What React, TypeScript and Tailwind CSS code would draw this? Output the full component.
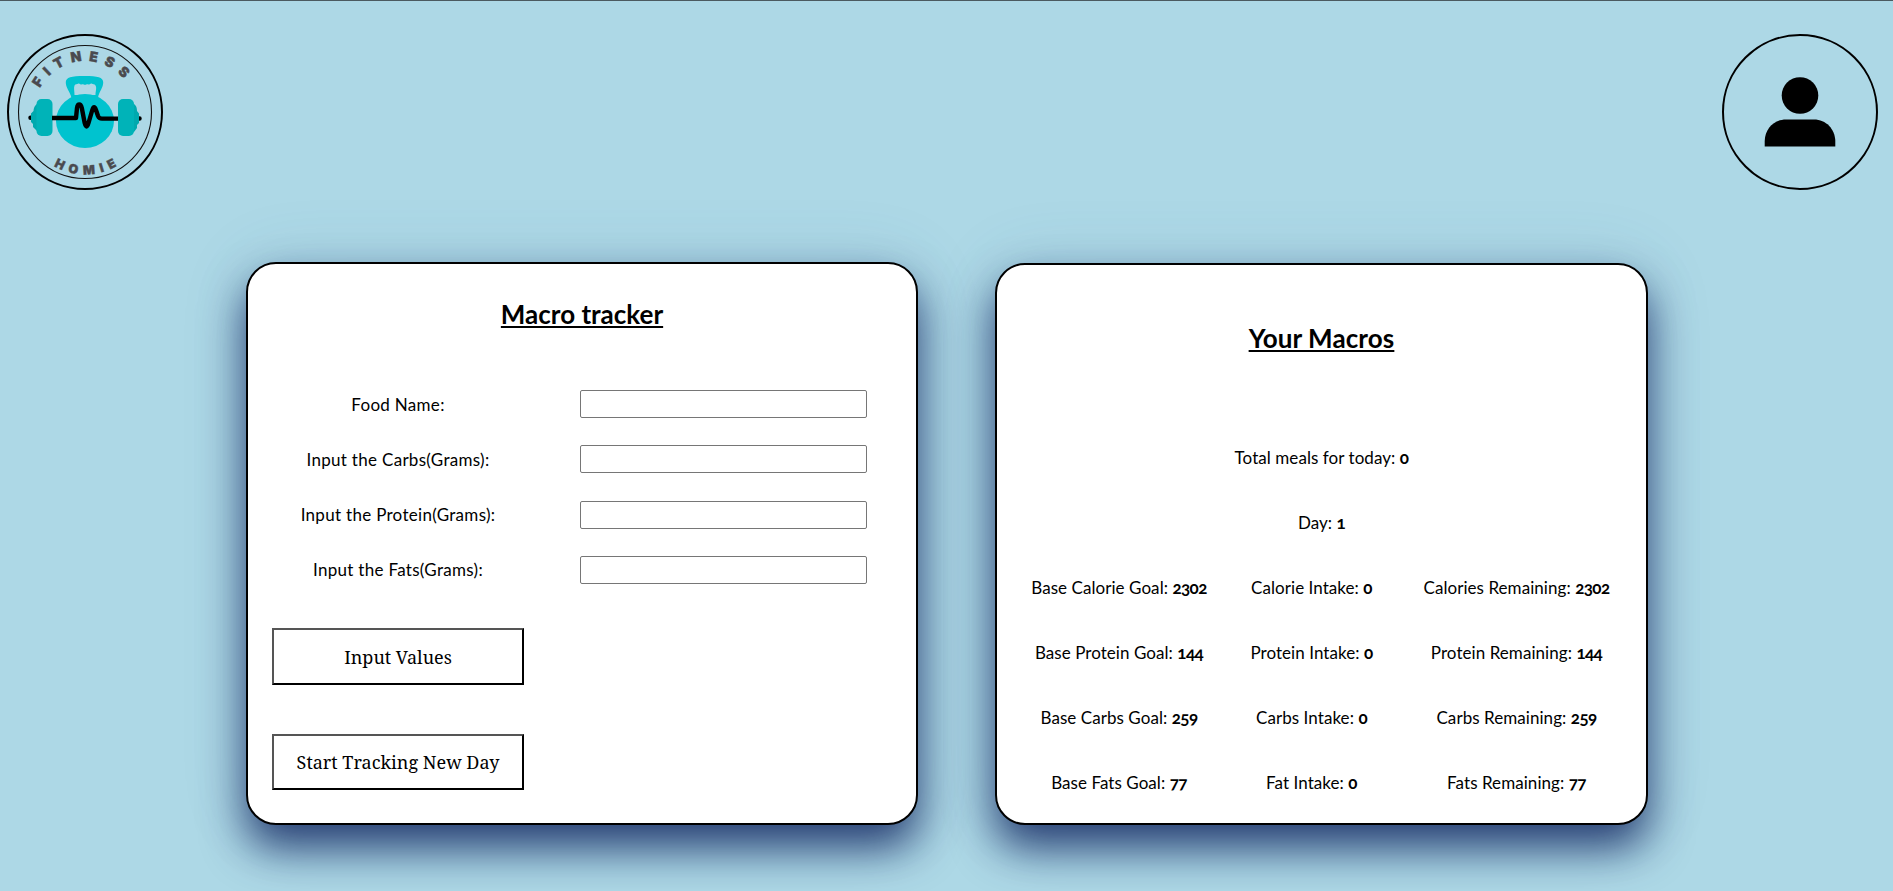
import React from "react";

function Logo() {
  return (
    <svg viewBox="0 0 156 156" className="size-[156px] shrink-0" aria-label="Fitness Homie">
      <defs>
        <path id="arcTop" d="M27 78 A51 51 0 0 1 129 78" />
        <path id="arcBottom" d="M15.500 78 A62.500 62.500 0 0 0 140.500 78" />
      </defs>
      <circle cx="78" cy="78" r="77" fill="none" stroke="#000" strokeWidth="2" />
      <circle cx="78" cy="78" r="66.5" fill="none" stroke="#111" strokeWidth="1.1" />
      <g fill="#4a4a4f" stroke="#4a4a4f" strokeWidth="0.4" fontFamily="Inter, sans-serif" fontWeight="900">
        <text textAnchor="middle" textLength="99" fontSize="13.8">
          <textPath href="#arcTop" startOffset="46.5%">FITNESS</textPath>
        </text>
        <text textAnchor="middle" textLength="66" fontSize="12.5">
          <textPath href="#arcBottom" startOffset="50.2%">HOMIE</textPath>
        </text>
      </g>
      <path
        fill="#00c3cf"
        fillRule="evenodd"
        d="M64.500 64 C63 57 58.500 54 58.800 48 C59 43.500 64 42 77.500 42 C91 42 96 43.500 96.200 48 C96.500 54 92 57 91 64 Z M67.500 61 H88.500 C88.500 57 90 54 88.500 51.500 C87.500 49.500 86 50.500 84.500 49.500 C83.500 49 82.500 51 81.500 50.500 C80 49.500 79 51 78 50.800 C77 51 76 49.500 74.500 50.500 C73.500 51 72.500 49 71.500 49.500 C70 50.500 68.500 49.500 67.500 51.500 C66.500 54 67.500 57 67.500 61 Z"
      />
      <ellipse cx="78" cy="87" rx="29" ry="27" fill="#00c3cf" />
      <path d="M23.500 83.800 H34 M122 84.500 H132.500" stroke="#000" strokeWidth="4.5" strokeLinecap="round" />
      <path d="M33 69 C28 70 27 73 26.500 77 L24 79.500 V88 L26 90 V93 L30 97 H35 V69 Z M124 69 C129 70 130 73 130 77 L132 79.500 V89 L130 91 V94 L127 98 H122 V69 Z" fill="#00a9ae" />
      <rect x="29.500" y="65" width="16" height="37" rx="5" fill="#00b3b8" />
      <rect x="111" y="65" width="16" height="37" rx="5" fill="#00b3b8" />
      <path
        d="M45 84 H69 L70 74 Q70.500 70.500 72.300 70.500 Q74 70.500 74.800 74 L77.700 89 Q79.500 96 81.500 89 L85.300 76 Q87 70.500 89 76 L91 82 Q92 84.600 95 84.600 H111"
        fill="none"
        stroke="#000"
        strokeWidth="4.400"
        strokeLinejoin="round"
      />
    </svg>
  );
}

function Avatar() {
  return (
    <svg viewBox="0 0 156 156" className="size-[156px] shrink-0" aria-label="Profile">
      <circle cx="78" cy="78" r="77" fill="none" stroke="#000" strokeWidth="2" />
      <circle cx="78" cy="61.500" r="18.300" />
      <path d="M42.700 112.500 V107 C43 95 52 85.500 64 85.500 H92 C104 85.500 113 95 113.300 107 V112.500 Z" />
    </svg>
  );
}

const fields = ["Food Name:", "Input the Carbs(Grams):", "Input the Protein(Grams):", "Input the Fats(Grams):"];

const rows = [
  [["Base Calorie Goal:", "2302"], ["Calorie Intake:", "0"], ["Calories Remaining:", "2302"]],
  [["Base Protein Goal:", "144"], ["Protein Intake:", "0"], ["Protein Remaining:", "144"]],
  [["Base Carbs Goal:", "259"], ["Carbs Intake:", "0"], ["Carbs Remaining:", "259"]],
  [["Base Fats Goal:", "77"], ["Fat Intake:", "0"], ["Fats Remaining:", "77"]],
];

const card =
  "rounded-[30px] border-2 border-black bg-white shadow-[0_23px_44px_rgba(4,22,85,0.78),0_0_70px_rgba(60,110,150,0.12)]";
const button =
  "w-[252px] border-2 border-t-[#555] border-l-[#555] border-r-black border-b-black bg-white font-['Noto_Serif','Liberation_Serif',serif] text-[18px]";

function Stat({ label, value }: { label: string; value: string }) {
  return (
    <p className="text-center whitespace-nowrap tracking-[0.06px]">
      {label} <b className="tracking-[-0.6px] oldstyle-nums">{value}</b>
    </p>
  );
}

export default function App() {
  return (
    <div className="h-[891px] w-full overflow-hidden border-t border-[#4b5a60] bg-[#add8e6] font-['Lato','Noto_Sans',sans-serif] text-[17px] leading-6 text-black">
      <header className="flex justify-between pt-[33px] pr-[15px] pl-[7px]">
        <Logo />
        <Avatar />
      </header>
      <main className="flex items-end gap-[77px] pt-[72px] pl-[246px]">
        <section className={`h-[563px] w-[672px] ${card}`}>
          <h1 className="pt-8 text-center text-[26px] leading-9 font-bold underline decoration-2 underline-offset-2">Macro tracker</h1>
          <div className="mt-[58px] grid grid-cols-[300px_287px] gap-x-8 gap-y-[27.330px]">
            {fields.map((f) => (
              <React.Fragment key={f}>
                <label className="flex h-7 items-center justify-center pt-px tracking-[0.3px]">{f}</label>
                <input className="h-7 w-[287px] rounded-[2px] border border-[#767676] bg-white" />
              </React.Fragment>
            ))}
          </div>
          <div className="mt-11 ml-6 flex flex-col gap-[49px]">
            <button className={`h-[57px] pt-0.5 ${button}`}>Input Values</button>
            <button className={`h-14 pt-px ${button}`}>Start Tracking New Day</button>
          </div>
        </section>
        <section className={`h-[562px] w-[653px] ${card}`}>
          <h1 className="pt-[55px] text-center text-[26px] leading-9 font-bold tracking-[0.1px] underline decoration-2 underline-offset-2">Your Macros</h1>
          <div className="mt-[90px] flex flex-col gap-[41px]">
            <Stat label="Total meals for today:" value="0" />
            <Stat label="Day:" value="1" />
            {rows.map((r) => (
              <div key={r[0][0]} className="grid grid-cols-[244px_141px_269px]">
                {r.map(([l, v]) => (
                  <Stat key={l} label={l} value={v} />
                ))}
              </div>
            ))}
          </div>
        </section>
      </main>
    </div>
  );
}
